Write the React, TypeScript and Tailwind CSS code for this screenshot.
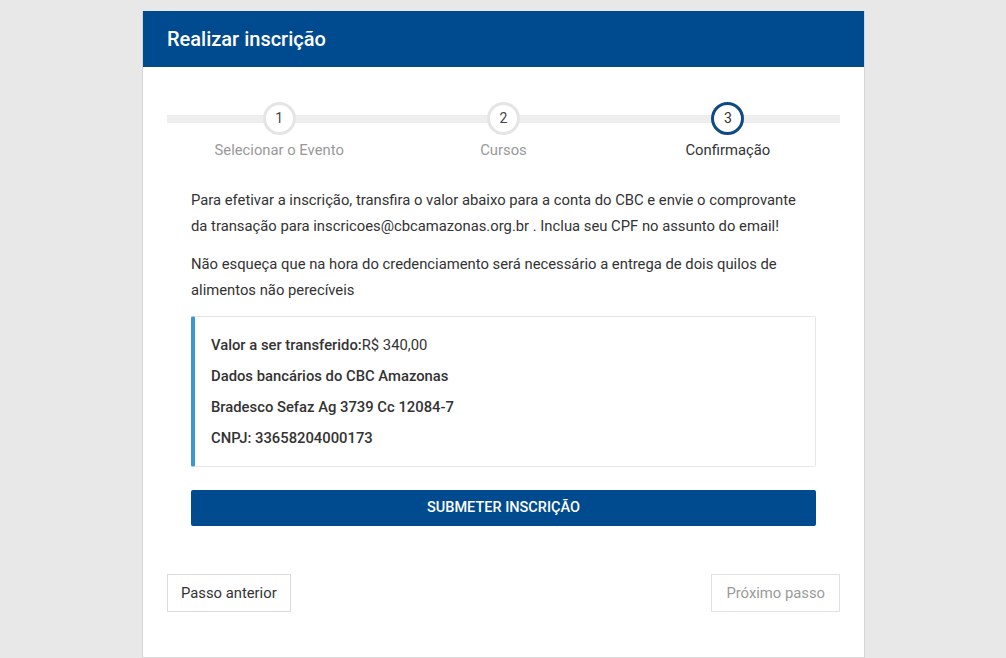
import React from 'react';

const steps = [
  { n: 1, label: 'Selecionar o Evento' },
  { n: 2, label: 'Cursos' },
  { n: 3, label: 'Confirmação' },
];

function Stepper({ active }: { active: number }) {
  return (
    <div className="relative">
      <div className="absolute left-0 right-0 top-[13px] h-2 bg-[#eeeeee]" />
      <div className="relative grid grid-cols-3">
        {steps.map((s) => (
          <div key={s.n} className="flex flex-col items-center">
            <div
              className={`flex h-[33px] w-[33px] items-center justify-center rounded-full border-[3px] bg-white text-[14px] ${
                s.n === active ? 'border-[#0f4a84] text-[#333]' : 'border-[#e5e5e5] text-[#444]'
              }`}
            >
              {s.n}
            </div>
            <span className={`mt-[6px] text-[14.8px] leading-[18px] ${s.n === active ? 'text-[#333]' : 'text-[#999]'}`}>
              {s.label}
            </span>
          </div>
        ))}
      </div>
    </div>
  );
}

export default function App() {
  return (
    <div className="min-h-screen bg-[#e8e8e8] pt-[11px] font-['Roboto',sans-serif]">
      <div className="ml-[142px] w-[723px] min-h-[647px] border border-t-0 border-[#d6d6d6] bg-white">
        <div className="flex h-[56px] items-center bg-[#004a8f] px-6">
          <h1 className="text-[20px] font-medium text-white">Realizar inscrição</h1>
        </div>

        <div className="px-6 pt-[35px]">
          <Stepper active={3} />

          <div className="px-6 pt-[28px] text-[14.8px] leading-[26px] text-[#333]">
            <p className="pr-2">
              Para efetivar a inscrição, transfira o valor abaixo para a conta do CBC e envie o comprovante da transação
              para inscricoes@cbcamazonas.org.br . Inclua seu CPF no assunto do email!
            </p>
            <p className="mt-3 pr-2">
              Não esqueça que na hora do credenciamento será necessário a entrega de dois quilos de alimentos não
              perecíveis
            </p>

            <div className="mt-[13px] rounded-[2px] border border-l-4 border-[#e6e6e6] border-l-[#3b97d3] px-4 pt-[13px] pb-[12px] font-medium leading-[31px] text-[#333]">
              <div>
                Valor a ser transferido:<span className="font-normal">R$ 340,00</span>
              </div>
              <div>Dados bancários do CBC Amazonas</div>
              <div>Bradesco Sefaz Ag 3739 Cc 12084-7</div>
              <div>CNPJ: 33658204000173</div>
            </div>

            <button className="mt-[23px] flex h-9 w-full items-center justify-center rounded-[2px] bg-[#004a8f] text-[14.5px] font-medium uppercase text-white">
              Submeter inscrição
            </button>
          </div>

          <div className="mt-[48px] flex items-center justify-between">
            <button className="h-[38px] border border-[#dcdcdc] bg-white px-[13px] text-[14.8px] text-[#333]">
              Passo anterior
            </button>
            <button className="h-[38px] border border-[#e2e2e2] bg-white px-[14px] text-[14.8px] text-[#9a9a9a]">
              Próximo passo
            </button>
          </div>
        </div>
      </div>
    </div>
  );
}
